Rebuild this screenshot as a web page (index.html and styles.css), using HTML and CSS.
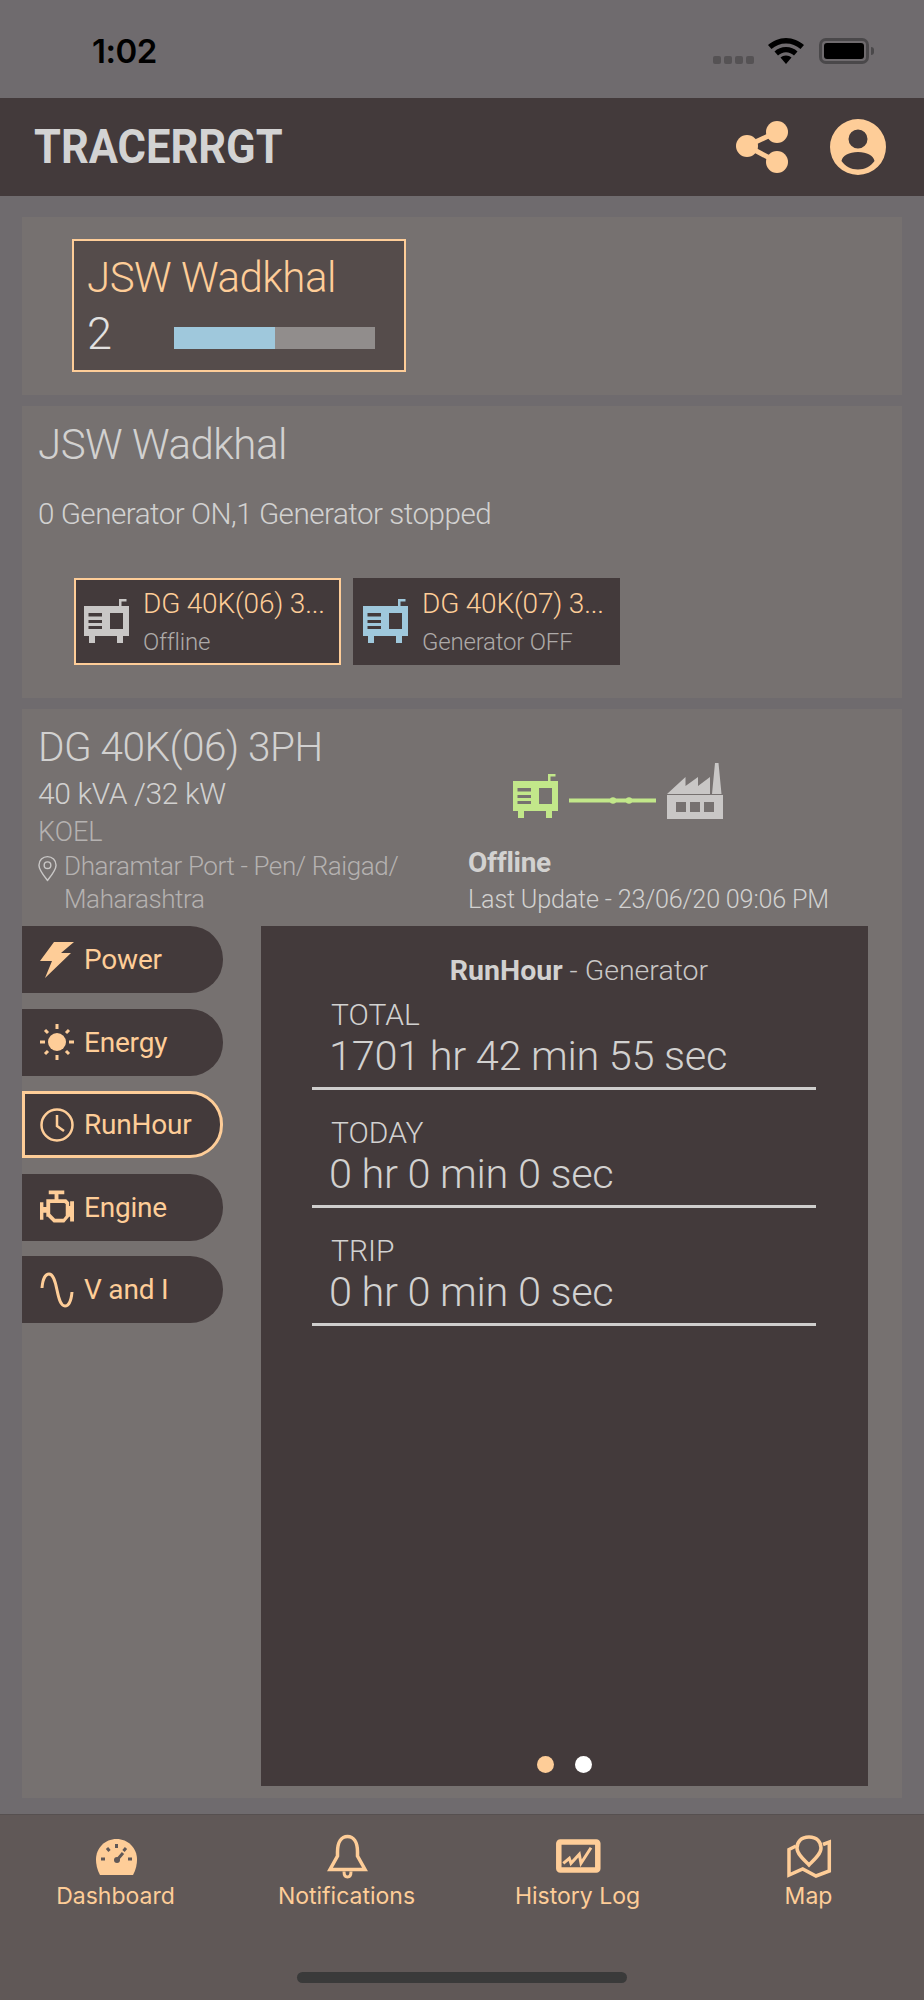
FILE: index.html
```html
<!DOCTYPE html>
<html lang="en">
<head>
<meta charset="utf-8">
<title>TRACERRGT</title>
<link rel="stylesheet" href="styles.css">
</head>
<body>
<svg class="defs" width="0" height="0" aria-hidden="true">
  <symbol id="gen" viewBox="0 0 45 45">
    <path fill="currentColor" fill-rule="evenodd" d="M35 0h7.500v2.500h-5v4.500h7.500v30h-6v7h-6v-7h-22v7h-6v-7h-5v-30h35zM4.500 14v3.500h13.500v-3.500zM4.500 21v3h13.500v-3zM4.500 27v3h13.500v-3zM26 14v16h13v-16z"/>
  </symbol>
</svg>
<div class="phone">
  <div class="status">
    <span class="clock">1:02</span>
    <div class="status-icons">
      <div class="signal"><i></i><i></i><i></i><i></i></div>
      <svg class="wifi" viewBox="0 0 36 26"><path d="M18 0C11 0 5 3 0 7l3.500 4C7.500 7.500 12.500 5.500 18 5.500S28.500 7.500 32.500 11L36 7C31 3 25 0 18 0z"/><path d="M18 9c-4.500 0-8.500 1.700-11.500 4.500l3.500 4c2-2 5-3.300 8-3.300s6 1.300 8 3.300l3.500-4C26.500 10.700 22.500 9 18 9z"/><path d="M18 17.500c-2.200 0-4 .8-5.500 2L18 26l5.500-6.500c-1.500-1.200-3.300-2-5.500-2z"/></svg>
      <div class="battery"><div class="battery-fill"></div></div>
    </div>
  </div>
  <header class="appbar">
    <h1 class="brand">TRACERRGT</h1>
    <div class="appbar-icons">
      <svg class="share" viewBox="0 0 54 54"><path d="M42 12L12 26l30 16" fill="none" stroke="#fecd98" stroke-width="5"/><circle cx="42" cy="12" r="11"/><circle cx="12" cy="26" r="11"/><circle cx="42" cy="42" r="11"/></svg>
      <svg class="profile" viewBox="0 0 56 56"><path fill-rule="evenodd" d="M28 0a28 28 0 1 0 0 56a28 28 0 1 0 0-56zM28 10.500a9.500 9.500 0 1 1 0 19a9.500 9.500 0 1 1 0-19zM28 33c9 0 15.500 3.500 16.500 9c-3.500 5-9.500 8.500-16.500 8.500S15 47 11.500 42C12.500 36.500 19 33 28 33z"/></svg>
    </div>
  </header>

  <main class="content">
    <section class="card card-sites">
      <div class="site">
        <div class="site-name">JSW Wadkhal</div>
        <div class="site-row">
          <span class="site-count">2</span>
          <div class="bar"><div class="bar-fill"></div></div>
        </div>
      </div>
    </section>

    <section class="card card-gens">
      <h2 class="gens-title">JSW Wadkhal</h2>
      <p class="gens-sub">0 Generator ON,1 Generator stopped</p>
      <div class="tiles">
        <div class="tile tile-on">
          <svg class="tile-icon ic-grey"><use href="#gen"/></svg>
          <div class="tile-text">
            <div class="tile-name">DG 40K(06) 3...</div>
            <div class="tile-state">Offline</div>
          </div>
        </div>
        <div class="tile">
          <svg class="tile-icon ic-blue"><use href="#gen"/></svg>
          <div class="tile-text">
            <div class="tile-name">DG 40K(07) 3...</div>
            <div class="tile-state">Generator OFF</div>
          </div>
        </div>
      </div>
    </section>

    <section class="card card-detail">
      <div class="detail-head">
        <div class="detail-left">
          <h2 class="detail-title">DG 40K(06) 3PH</h2>
          <div class="detail-rating">40 kVA /32 kW</div>
          <div class="detail-make">KOEL</div>
          <div class="detail-loc">
            <svg class="pin" viewBox="0 0 20 27"><path d="M10 1C5 1 1 5 1 10c0 5 5 11 9 16c4-5 9-11 9-16c0-5-4-9-9-9z" fill="none" stroke="#c9c7c6" stroke-width="1.500"/><circle cx="10" cy="10" r="3.500" fill="none" stroke="#c9c7c6" stroke-width="1.500"/></svg>
            <span>Dharamtar Port - Pen/ Raigad/ Maharashtra</span>
          </div>
        </div>
        <div class="detail-right">
          <div class="flow">
            <svg class="flow-gen"><use href="#gen"/></svg>
            <svg class="flow-line" viewBox="0 0 87 9"><path d="M0 4.500h87" stroke="#c2e78a" stroke-width="4"/><circle cx="44" cy="4.500" r="3.200" fill="#c2e78a"/><circle cx="60" cy="4.500" r="3.200" fill="#c2e78a"/></svg>
            <svg class="flow-plant" viewBox="0 0 56 56"><path fill="#c9c7c6" fill-rule="evenodd" d="M0 32h56v24h-56zM9 39v10h10v-10zM23 39v10h10v-10zM37 39v10h10v-10z"/><path fill="#c9c7c6" d="M0 31l18.500-17v9l12.500-9v9l12-9v17zM45 31l3-31h3.500l3 31z"/></svg>
          </div>
          <div class="detail-status">Offline</div>
          <div class="detail-update">Last Update - 23/06/20 09:06 PM</div>
        </div>
      </div>

      <div class="detail-body">
        <nav class="tabs">
          <div class="tab">
            <svg class="tab-icon" viewBox="0 0 34 36"><path fill="#fecd98" d="M14 0h20L21 11h10L5 36l7-17H0z"/></svg>
            <span>Power</span>
          </div>
          <div class="tab">
            <svg class="tab-icon" viewBox="0 0 34 36"><g stroke="#fecd98" stroke-width="3"><path d="M17 0v5M17 31v5M0 18h5M29 18h5M5 6l3 3M29 6l-3 3M5 30l3-3M29 30l-3-3"/></g><circle cx="17" cy="18" r="9" fill="#fecd98"/></svg>
            <span>Energy</span>
          </div>
          <div class="tab tab-on">
            <svg class="tab-icon" viewBox="0 0 34 36"><circle cx="17" cy="18" r="15.500" fill="none" stroke="#fecd98" stroke-width="2.500"/><path d="M17 8v11l7 5" fill="none" stroke="#fecd98" stroke-width="2.500"/></svg>
            <span>RunHour</span>
          </div>
          <div class="tab">
            <svg class="tab-icon" viewBox="0 0 35 36"><path fill="#fecd98" fill-rule="evenodd" d="M9 1H25V5H19V10H27L30 13V17H31V12H35V33H31V28H30L25 34H14L8 28H6.500V24H3.500V31H0V13H3.500V18H6.500V10H15V5H9zM10.500 14V25L15.500 30H24L26.500 27V15L25 14z"/></svg>
            <span>Engine</span>
          </div>
          <div class="tab">
            <svg class="tab-icon" viewBox="0 0 34 36"><path d="M2 16C3 4 7 2 9 2c4 0 6 6 8 16s4 16 8 16c2 0 6-2 7-14" fill="none" stroke="#fecd98" stroke-width="3"/></svg>
            <span>V and I</span>
          </div>
        </nav>

        <div class="panel">
          <div class="panel-title"><b>RunHour</b> - Generator</div>
          <div class="metric">
            <div class="metric-label">TOTAL</div>
            <div class="metric-value">1701 hr 42 min 55 sec</div>
          </div>
          <div class="metric">
            <div class="metric-label">TODAY</div>
            <div class="metric-value">0 hr 0 min 0 sec</div>
          </div>
          <div class="metric">
            <div class="metric-label">TRIP</div>
            <div class="metric-value">0 hr 0 min 0 sec</div>
          </div>
          <div class="dots"><i class="dot dot-on"></i><i class="dot"></i></div>
        </div>
      </div>
    </section>
  </main>

  <footer class="tabbar">
    <div class="nav-items">
      <div class="nav-item">
        <svg class="nav-icon" viewBox="0 0 46 46"><path fill="#fecd98" d="M7 41C4 36 3 30 3 25.500C3 14 12 5 23.500 5S44 14 44 25.500C44 30 43 36 40 41z"/><g stroke="#605857" stroke-width="3" fill="none"><path d="M23.500 10v4M14 14l2.500 3M33 14l-2.500 3M8 25h4M35 25h4M24 26l6-7"/></g><circle cx="24" cy="26" r="3" fill="#605857"/></svg>
        <span>Dashboard</span>
      </div>
      <div class="nav-item">
        <svg class="nav-icon" viewBox="0 0 46 46"><path fill="none" stroke="#fecd98" stroke-width="3.500" d="M13.500 18C13.500 8 17.500 2.500 23.500 2.500S33.500 8 33.500 18V22L41 35.500H6L13.500 22z"/><path fill="none" stroke="#fecd98" stroke-width="3" d="M20 37.500c0 4 1.500 5.500 3.500 5.500s3.500-1.500 3.500-5.500"/></svg>
        <span>Notifications</span>
      </div>
      <div class="nav-item">
        <svg class="nav-icon" viewBox="0 0 46 46"><rect x="3.800" y="8" width="39" height="28" rx="1.500" fill="none" stroke="#fecd98" stroke-width="5.500"/><path d="M8.300 29.300L14.300 24.300L16 29.300L24.300 20.300L26 29.300L36 13.700" fill="none" stroke="#fecd98" stroke-width="3"/></svg>
        <span>History Log</span>
      </div>
      <div class="nav-item">
        <svg class="nav-icon" viewBox="0 0 46 46"><path fill="none" stroke="#fecd98" stroke-width="3.500" d="M23 3C15 3 11 8 11 14C11 20 18 26 23 31C28 26 35 20 35 14C35 8 31 3 23 3z"/><path fill="none" stroke="#fecd98" stroke-width="3.500" d="M10 12L3 15.500V41L16.700 35L30 42L43.300 37V8L37 10.500"/></svg>
        <span>Map</span>
      </div>
    </div>
    <div class="home-bar"></div>
  </footer>
</div>
</body>
</html>
```
FILE: styles.css
```css
* { box-sizing: border-box; }
html, body { margin: 0; padding: 0; }
body {
  background: #6f6b6e;
  font-family: "Roboto", "Liberation Sans", sans-serif;
  font-weight: 300;
  color: #d2d1d0;
}
.defs { position: absolute; }
.phone { width: 924px; height: 2000px; display: flex; flex-direction: column; overflow: hidden; }

/* status bar */
.status { height: 98px; flex: none; display: flex; justify-content: space-between; padding: 31px 55px 0 92px; }
.clock { font: 600 33px/40px "Inter", sans-serif; color: #000; letter-spacing: -0.5px; }
.status-icons { display: flex; align-items: flex-start; height: 30px; padding-top: 7px; }
.signal { display: flex; gap: 3px; margin: 18px 14px 0 0; }
.signal i { width: 8px; height: 8px; border-radius: 2px; background: #555254; }
.wifi { width: 36px; height: 26px; fill: #000; margin-right: 15px; }
.battery { position: relative; width: 50px; height: 26px; border: 3px solid #4a484a; border-radius: 7px; padding: 2px; }
.battery::after { content: ""; position: absolute; right: -8px; top: 6px; width: 3px; height: 8px; border-radius: 0 3px 3px 0; background: #4a484a; }
.battery-fill { height: 100%; background: #000; border-radius: 3px; }

/* app bar */
.appbar { height: 98px; flex: none; background: #433a3b; display: flex; align-items: center; justify-content: space-between; padding: 0 38px 0 34px; }
.brand { margin: 0; font: 700 48px/1 "Roboto", sans-serif; color: #d3d3d3; transform: scaleX(.905); transform-origin: left center; }
.appbar-icons { display: flex; align-items: center; gap: 41px; }
.share { width: 54px; height: 54px; fill: #fecd98; }
.profile { width: 56px; height: 56px; fill: #fecd98; }

/* cards */
.content { flex: 1; padding: 21px 22px 16px; display: flex; flex-direction: column; gap: 11px; }
.card { background: #767170; }
.card-sites { height: 178px; padding: 22px 50px; }
.site { width: 334px; height: 133px; background: #554c4b; border: 2px solid #fecd98; padding: 14px 13px; }
.site-name { font-size: 42px; line-height: 46px; color: #fecd98; letter-spacing: -0.5px; }
.site-row { display: flex; align-items: center; margin-top: 8px; }
.site-count { width: 87px; font-size: 45px; line-height: 50px; color: #e2e1e0; }
.bar { width: 201px; height: 22px; margin-top: 7px; background: #918d8c; }
.bar-fill { width: 50%; height: 100%; background: #9fc8dc; }

.card-gens { height: 292px; padding: 16px 16px; }
.gens-title { margin: 0; font-size: 42px; line-height: 46px; font-weight: 300; letter-spacing: -0.5px; color: #d2d1d0; }
.gens-sub { margin: 30px 0 0; font-size: 29.600px; line-height: 32px; letter-spacing: -0.5px; }
.tiles { display: flex; gap: 12px; margin: 48px 0 0 36px; }
.tile { width: 267px; height: 87px; background: #433a3b; display: flex; align-items: center; padding: 0 10px; gap: 14px; }
.tile-on { border: 2px solid #fecd98; padding: 0 8px; }
.tile-icon { width: 45px; height: 45px; flex: none; }
.ic-grey { color: #c9c7c6; }
.ic-blue { color: #9fc8dc; }
.tile-name { font-size: 28px; line-height: 34px; color: #fecd98; white-space: nowrap; letter-spacing: -0.2px; }
.tile-state { font-size: 24px; line-height: 30px; margin-top: 6px; color: #aeaaa9; letter-spacing: -0.2px; }

.card-detail { flex: 1; display: flex; flex-direction: column; }
.detail-head { display: flex; height: 217px; }
.detail-left { width: 446px; padding: 15px 0 0 16px; }
.detail-title { margin: 0; font-size: 40.500px; line-height: 46px; font-weight: 300; letter-spacing: -0.5px; }
.detail-rating { font-size: 30px; line-height: 36px; margin-top: 6px; letter-spacing: -0.4px; }
.detail-make { font-size: 27px; line-height: 36px; margin-top: 2px; color: #b5b2b1; }
.detail-loc { display: flex; gap: 7px; font-size: 26px; line-height: 33px; color: #b5b2b1; letter-spacing: -0.4px; }
.pin { width: 19px; height: 27px; flex: none; margin-top: 5px; }
.detail-right { flex: 1; }
.flow { display: flex; align-items: flex-end; height: 110px; margin-left: 45px; }
.flow-gen { width: 45px; height: 45px; color: #c2e78a; }
.flow-line { width: 87px; height: 9px; margin: 0 11px 14px 11px; }
.flow-plant { width: 56px; height: 56px; }
.detail-status { font-weight: 700; font-size: 28px; line-height: 32px; margin-top: 28px; letter-spacing: -0.3px; color: #d2d1d0; }
.detail-update { font-size: 25.200px; line-height: 32px; margin-top: 5px; color: #d2d1d0; letter-spacing: -0.2px; }

.detail-body { flex: 1; display: flex; gap: 38px; padding-bottom: 12px; }
.tabs { width: 201px; flex: none; display: flex; flex-direction: column; gap: 15.500px; }
.tab { height: 67px; background: #433a3b; border-radius: 0 33px 33px 0; display: flex; align-items: center; gap: 10px; padding-left: 18px; font-size: 28px; font-weight: 400; color: #fecd98; letter-spacing: -0.2px; }
.tab-on { border: 3px solid #fecd98; padding-left: 15px; }
.tab-icon { width: 34px; height: 36px; flex: none; }
.panel { position: relative; width: 607px; background: #433a3b; padding: 27px 52px 0 51px; }
.panel-title { text-align: center; padding-left: 30px; font-size: 28.500px; line-height: 36px; margin-bottom: 8px; color: #c9c7c6; }
.panel-title b { font-weight: 700; color: #d2d1d0; }
.metric { height: 93px; margin-bottom: 25px; border-bottom: 3px solid #cfcecd; padding-left: 19px; }
.metric-label { font-size: 30px; line-height: 36px; font-weight: 300; }
.metric-value { font-size: 41.500px; line-height: 40px; font-weight: 300; white-space: nowrap; margin: 3px 0 0 -2px; letter-spacing: -0.3px; }
.dots { position: absolute; left: 0; right: 0; bottom: 13px; display: flex; justify-content: center; gap: 21px; }
.dot { width: 17px; height: 17px; border-radius: 50%; background: #fff; }
.dot-on { background: #fecd98; }

/* tab bar */
.tabbar { height: 186px; flex: none; background: #605857; border-top: 1px solid #565050; position: relative; }
.nav-items { display: grid; grid-template-columns: repeat(4, 231px); padding-top: 19px; }
.nav-item { display: flex; flex-direction: column; align-items: center; font: 400 23px/28px "Inter", sans-serif; color: #fecd98; }
.nav-icon { width: 46px; height: 46px; margin-bottom: 2px; }
.home-bar { position: absolute; left: 297px; top: 157px; width: 330px; height: 11px; border-radius: 6px; background: #3a3a3a; }
```
